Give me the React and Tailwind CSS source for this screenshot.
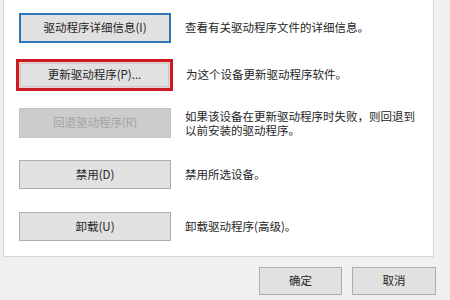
export default function App() {
  const font = { fontFamily: '"Noto Sans CJK SC", "Liberation Sans", sans-serif' };

  return (
    <div
      className="w-[450px] h-[300px] bg-[#f0f0f0] overflow-hidden text-[11.5px] text-[#262626]"
      style={font}
    >
      <div className="ml-[3px] w-[431px] h-[257px] bg-white border-x border-b border-[#d6d6d6] pl-[15px]">
        {/* 驱动程序详细信息 */}
        <div className="flex items-center pt-[13px]">
          <button className="w-[152px] h-[30px] bg-[#e5f1fb] border-2 border-[#2f76b8] flex items-center justify-center">
            <span className="bg-[#e1e1e1] w-full h-full flex items-center justify-center">驱动程序详细信息(I)</span>
          </button>
          <span className="ml-[14px]">查看有关驱动程序文件的详细信息。</span>
        </div>

        {/* 更新驱动程序 */}
        <div className="flex items-center mt-[16px] -ml-[3px]">
          <div className="w-[157px] h-[32px] border-[3px] border-[#cc1a22] p-px bg-[#f3d0d0]">
            <button className="w-full h-full bg-[#e1e1e1] border border-[#c9c9c9] flex items-center justify-center">
              更新驱动程序(P)...
            </button>
          </div>
          <span className="ml-[13px]">为这个设备更新驱动程序软件。</span>
        </div>

        {/* 回退驱动程序 */}
        <div className="flex items-center mt-[17px]">
          <button className="w-[152px] h-[30px] bg-[#cccccc] border border-[#c4c4c4] text-[#a3a3a3] flex items-center justify-center">
            回退驱动程序(R)
          </button>
          <span className="ml-[14px] leading-[14px]">
            如果该设备在更新驱动程序时失败，则回退到
            <br />
            以前安装的驱动程序。
          </span>
        </div>

        {/* 禁用 */}
        <div className="flex items-center mt-[22px]">
          <button className="w-[152px] h-[29px] bg-[#e1e1e1] border border-[#adadad] flex items-center justify-center">
            禁用(D)
          </button>
          <span className="ml-[14px]">禁用所选设备。</span>
        </div>

        {/* 卸载 */}
        <div className="flex items-center mt-[23px]">
          <button className="w-[152px] h-[29px] bg-[#e1e1e1] border border-[#adadad] flex items-center justify-center">
            卸载(U)
          </button>
          <span className="ml-[14px]">卸载驱动程序(高级)。</span>
        </div>
      </div>

      <div className="flex justify-end gap-[10px] pr-[14px] mt-[10px]">
        <button className="w-[83px] h-[28px] bg-[#e1e1e1] border border-[#adadad] flex items-center justify-center">
          确定
        </button>
        <button className="w-[84px] h-[28px] bg-[#e1e1e1] border border-[#adadad] flex items-center justify-center">
          取消
        </button>
      </div>
    </div>
  );
}
